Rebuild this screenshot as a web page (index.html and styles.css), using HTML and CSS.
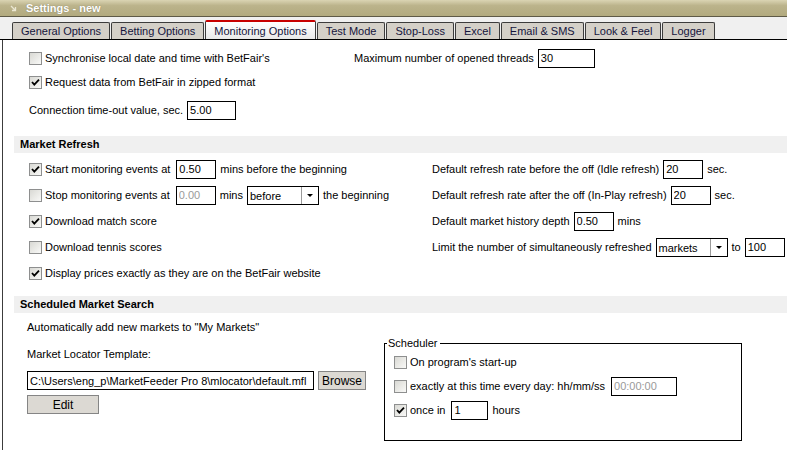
FILE: index.html
```html
<!DOCTYPE html>
<html lang="en">
  <head>
    <meta charset="UTF-8" />
    <meta name="viewport" content="width=device-width, initial-scale=1.0" />
    <title>Settings - new</title>
    <link rel="stylesheet" href="styles.css">
  </head>

  <body>
    <div class="titlebar">
      <svg class="title-icon" width="7" height="7" viewBox="0 0 7 7">
        <path d="M1 1 L5.5 5.5 M5.5 2 L5.5 5.5 L2 5.5" fill="none" stroke="#ebe7d2" stroke-width="1.3" />
      </svg>
      <span>Settings - new</span>
    </div>

    <ul class="tabs">
      <li class="tab">General Options</li>
      <li class="tab">Betting Options</li>
      <li class="tab active">Monitoring Options</li>
      <li class="tab">Test Mode</li>
      <li class="tab">Stop-Loss</li>
      <li class="tab">Excel</li>
      <li class="tab">Email &amp; SMS</li>
      <li class="tab">Look &amp; Feel</li>
      <li class="tab">Logger</li>
    </ul>

    <div class="panel">
      <div class="general">
        <div class="row">
          <label class="opt sync"><span class="check"></span>Synchronise local date and time with BetFair's</label>
          <span>Maximum number of opened threads</span>
          <input type="text" class="field threads" value="30" readonly />
        </div>
        <div class="row">
          <label class="opt"><span class="check on"><svg width="11" height="11" viewBox="0 0 11 11"><polyline points="2,5 4.3,7.6 9,2.6" fill="none" stroke="#000" stroke-width="1.8" /></svg></span>Request data from BetFair in zipped format</label>
        </div>
        <div class="row spaced">
          <span>Connection time-out value, sec.</span>
          <input type="text" class="field timeout" value="5.00" readonly />
        </div>
      </div>

      <h2 class="section-title">Market Refresh</h2>
      <div class="refresh">
        <div class="refresh-left">
          <div class="row tall">
            <label class="opt"><span class="check on"><svg width="11" height="11" viewBox="0 0 11 11"><polyline points="2,5 4.3,7.6 9,2.6" fill="none" stroke="#000" stroke-width="1.8" /></svg></span>Start monitoring events at</label>
            <input type="text" class="field num first" value="0.50" readonly />
            <span>mins before the beginning</span>
          </div>
          <div class="row tall">
            <label class="opt"><span class="check"></span>Stop monitoring events at</label>
            <input type="text" class="field num first disabled" value="0.00" readonly />
            <span>mins</span>
            <div class="combo"><span class="combo-text">before</span><span class="combo-btn"></span></div>
            <span>the beginning</span>
          </div>
          <div class="row tall">
            <label class="opt"><span class="check on"><svg width="11" height="11" viewBox="0 0 11 11"><polyline points="2,5 4.3,7.6 9,2.6" fill="none" stroke="#000" stroke-width="1.8" /></svg></span>Download match score</label>
          </div>
          <div class="row tall">
            <label class="opt"><span class="check"></span>Download tennis scores</label>
          </div>
          <div class="row tall">
            <label class="opt"><span class="check on"><svg width="11" height="11" viewBox="0 0 11 11"><polyline points="2,5 4.3,7.6 9,2.6" fill="none" stroke="#000" stroke-width="1.8" /></svg></span>Display prices exactly as they are on the BetFair website</label>
          </div>
        </div>
        <div class="refresh-right">
          <div class="row tall">
            <span>Default refresh rate before the off (Idle refresh)</span>
            <input type="text" class="field num" value="20" readonly />
            <span>sec.</span>
          </div>
          <div class="row tall">
            <span>Default refresh rate after the off (In-Play refresh)</span>
            <input type="text" class="field num" value="20" readonly />
            <span>sec.</span>
          </div>
          <div class="row tall">
            <span>Default market history depth</span>
            <input type="text" class="field num" value="0.50" readonly />
            <span>mins</span>
          </div>
          <div class="row tall">
            <span>Limit the number of simultaneously refreshed</span>
            <div class="combo"><span class="combo-text">markets</span><span class="combo-btn"></span></div>
            <span>to</span>
            <input type="text" class="field num" value="100" readonly />
          </div>
        </div>
      </div>

      <h2 class="section-title">Scheduled Market Search</h2>
      <div class="scheduled">
        <div class="locator">
          <p class="line first-line">Automatically add new markets to "My Markets"</p>
          <p class="line">Market Locator Template:</p>
          <div class="path-row">
            <input type="text" class="field path" value="C:\Users\eng_p\MarketFeeder Pro 8\mlocator\default.mfl" readonly />
            <button class="btn browse">Browse</button>
          </div>
          <button class="btn edit">Edit</button>
        </div>
        <fieldset class="scheduler">
          <legend>Scheduler</legend>
          <div class="row tight">
            <label class="opt"><span class="check"></span>On program's start-up</label>
          </div>
          <div class="row tight">
            <label class="opt"><span class="check"></span>exactly at this time every day: hh/mm/ss</label>
            <input type="text" class="field time disabled" value="00:00:00" readonly />
          </div>
          <div class="row tight">
            <label class="opt"><span class="check on"><svg width="11" height="11" viewBox="0 0 11 11"><polyline points="2,5 4.3,7.6 9,2.6" fill="none" stroke="#000" stroke-width="1.8" /></svg></span>once in</label>
            <input type="text" class="field hours first" value="1" readonly />
            <span>hours</span>
          </div>
        </fieldset>
      </div>
    </div>
  </body>
</html>
```

FILE: styles.css
```css
body {
  font-family: "Liberation Sans", Arial, sans-serif;
  font-size: 11px;
  color: #000;
  margin: 0;
  padding: 0;
  background-color: #fff;
}

.titlebar {
  height: 16px;
  display: flex;
  align-items: center;
  gap: 9px;
  padding-left: 10px;
  background: linear-gradient(#dad4b3, #bbb38b 35%, #b2aa7f);
  border-bottom: 1px solid #5e5a47;
  color: #fff;
  font-size: 11px;
  font-weight: bold;
  text-shadow: 0 0 1px rgba(80, 75, 50, 0.6);
}

.tabs {
  display: flex;
  align-items: flex-end;
  height: 22px;
  margin: 0;
  padding: 0 0 0 12px;
  list-style: none;
  background-color: #f0f0f0;
  border-bottom: 1px solid #000;
}

.tab {
  height: 16px;
  line-height: 16px;
  padding: 0 8px;
  margin-right: 1px;
  background-color: #d4d0c8;
  border: 1px solid #3c3c3c;
  border-bottom: none;
  border-radius: 2px 2px 0 0;
  color: #14143c;
}

.tab.active {
  height: 17px;
  line-height: 18px;
  border-top: 2px solid #c80000;
  background: linear-gradient(#ffffff, #e9e9e9);
}

.panel {
  height: 410px;
  margin-left: 2px;
  border-left: 1px solid #3c3c3c;
}

.row {
  display: flex;
  align-items: center;
  gap: 4px;
  height: 24px;
  white-space: nowrap;
}

.row.spaced {
  margin-top: 4px;
}

.row.tall {
  height: 26px;
}

.opt {
  display: flex;
  align-items: center;
  gap: 3px;
}

.opt.sync {
  width: 321px;
}

.check {
  display: flex;
  align-items: center;
  justify-content: center;
  width: 13px;
  height: 13px;
  box-sizing: border-box;
  border: 1px solid #8e8f8f;
  background: linear-gradient(135deg, #d9d9d4, #f9f9f7);
}

.field {
  height: 19px;
  box-sizing: border-box;
  padding: 0 2px;
  border: 1px solid #000;
  border-radius: 0;
  font-family: inherit;
  font-size: 11px;
  color: #000;
  background-color: #fff;
  outline: none;
}

.field.first {
  margin-left: 2px;
}

.field.disabled {
  color: #9a9a9a;
}

.threads {
  width: 57px;
}

.timeout {
  width: 49px;
}

.num {
  width: 40px;
}

.path {
  width: 287px;
}

.time {
  width: 66px;
  margin-left: 2px;
}

.hours {
  width: 37px;
}

.general {
  padding: 6px 0 0 26px;
  margin-bottom: 14px;
}

.section-title {
  height: 17px;
  line-height: 17px;
  margin: 0 0 0 11px;
  padding-left: 6px;
  background-color: #f0f0f0;
  font-size: 11px;
  font-weight: bold;
}

.refresh {
  display: flex;
  padding: 3px 0 0 26px;
  margin-bottom: 10px;
}

.refresh-left {
  width: 403px;
}

.combo {
  display: flex;
  width: 72px;
  height: 19px;
  box-sizing: border-box;
  border: 1px solid #000;
  background-color: #fff;
}

.combo-text {
  flex: 1;
  padding-left: 2px;
  line-height: 19px;
}

.combo-btn {
  display: flex;
  align-items: center;
  justify-content: center;
  width: 16px;
  border-left: 1px solid #9a9a9a;
}

.combo-btn::after {
  content: "";
  border-left: 3px solid transparent;
  border-right: 3px solid transparent;
  border-top: 3px solid #000;
}

.scheduled {
  display: flex;
  padding-left: 24px;
}

.locator {
  width: 357px;
}

.line {
  height: 18px;
  line-height: 18px;
  margin: 9px 0 0;
}

.line.first-line {
  margin-top: 5px;
}

.path-row {
  display: flex;
  gap: 4px;
  margin-top: 8px;
}

.btn {
  height: 19px;
  box-sizing: border-box;
  padding: 0;
  border: 1px solid #858585;
  background-color: #dcd9d3;
  font-family: inherit;
  font-size: 12px;
  color: #000;
}

.browse {
  width: 48px;
}

.edit {
  width: 72px;
  margin-top: 5px;
}

.scheduler {
  width: 358px;
  height: 104px;
  box-sizing: border-box;
  margin: 24px 0 0;
  padding: 0 0 0 9px;
  border: 1px solid #000;
}

.scheduler legend {
  margin-left: -7px;
  padding: 0 2px 0 1px;
  line-height: 13px;
}

.row.tight {
  height: 24px;
}
```
